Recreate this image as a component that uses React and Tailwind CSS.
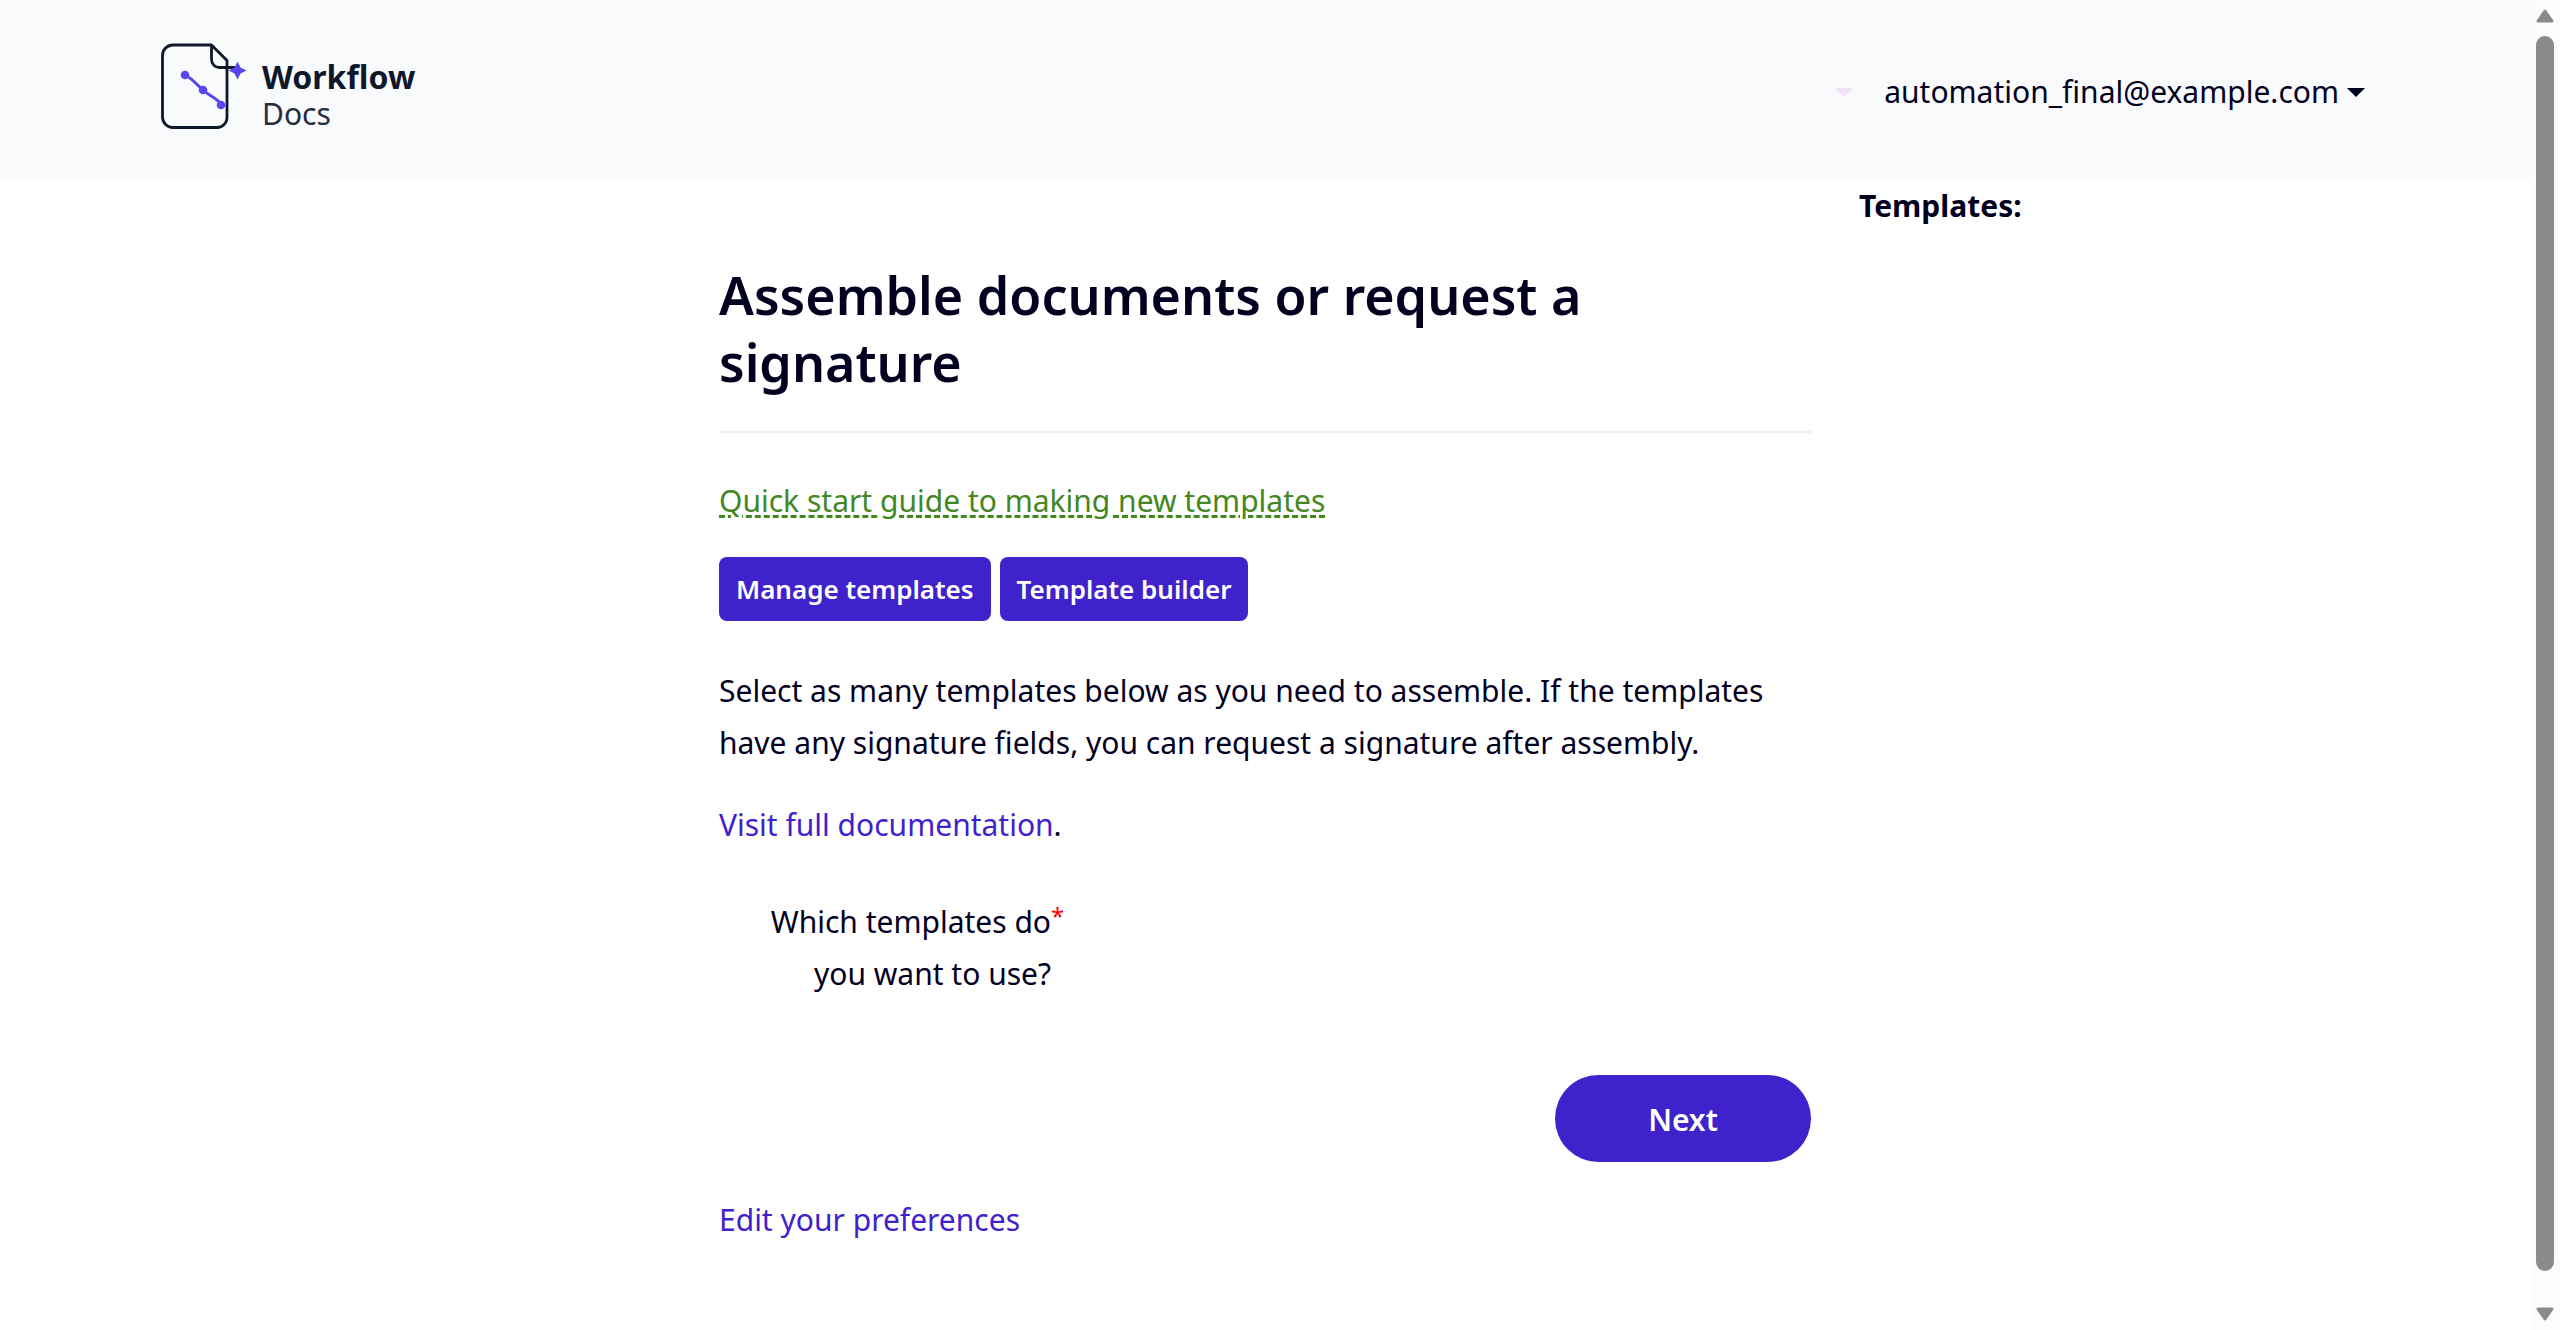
import React from "react";

function Logo() {
  return (
    <svg width="86" height="88" viewBox="0 0 86 88" fill="none" aria-hidden="true">
      <path
        d="M50 2H12A10.500 10.500 0 0 0 1.500 12.500V74A10.500 10.500 0 0 0 12 84.500H56A10 10 0 0 0 66 74.500V17.500L50.500 2V16.500A8 8 0 0 0 58.500 24.500H73"
        stroke="#0f172a"
        strokeWidth="2.800"
        strokeLinejoin="round"
        strokeLinecap="round"
      />
      <path
        d="M24 32C32 36 37 43 42 47C47 52 56 55 60 61"
        stroke="#5b45f0"
        strokeWidth="3"
        strokeLinecap="round"
      />
      <circle cx="24" cy="32" r="4.300" fill="#5b45f0" />
      <circle cx="42" cy="47" r="4.300" fill="#5b45f0" />
      <circle cx="60" cy="62" r="4.300" fill="#5b45f0" />
      <path d="M76.500 18.500L79.500 24.500L85.500 27.500L79.500 30.500L76.500 36.500L73.500 30.500L67.500 27.500L73.500 24.500Z" fill="#5b45f0" />
    </svg>
  );
}

function Caret({ className }) {
  return (
    <svg width="18" height="9" viewBox="0 0 18 9" className={className} aria-hidden="true">
      <path d="M0 0H18L9 9Z" fill="currentColor" />
    </svg>
  );
}

function ScrollArrow({ className }) {
  return (
    <svg width="18" height="14" viewBox="0 0 18 14" className={className} aria-hidden="true">
      <path d="M9 2L16 12H2Z" fill="#8b8b8b" stroke="#8b8b8b" strokeWidth="3" strokeLinejoin="round" />
    </svg>
  );
}

function Header() {
  return (
    <header className="bg-[#f8fafc]">
      <div className="mx-auto flex max-w-[2280px] items-start justify-between pt-[43px] pr-10 pb-12 pl-9">
        <a href="#home" className="flex items-start gap-[15px]">
          <Logo />
          <span className="flex flex-col pt-[15px] text-[#0f172a]">
            <span className="text-[32px] leading-[37px] font-bold">Workflow</span>
            <span className="text-[30px] leading-[37px] text-[#272c40]">Docs</span>
          </span>
        </a>
        <nav className="flex items-center gap-[31px] pt-[23px]">
          <button type="button" aria-label="Menu" className="text-[#ede3f5]">
            <Caret />
          </button>
          <button type="button" className="flex items-center gap-2 leading-[52px]">
            automation_final@example.com
            <Caret />
          </button>
        </nav>
      </div>
    </header>
  );
}

function ActionLink({ href, children }) {
  return (
    <a
      href={href}
      className="rounded-lg bg-[#3f22cb] px-[17px] py-3 text-[26px] leading-10 font-semibold text-white"
    >
      {children}
    </a>
  );
}

export default function App() {
  return (
    <div className="flex min-h-screen bg-white font-['Noto_Sans',sans-serif] text-[30px] leading-[52px] text-[#02001f]">
      <div className="min-w-0 flex-1">
        <Header />
        <div className="mx-auto flex max-w-[2280px]">
          <main className="ml-[25%] w-1/2 px-6 pt-[81px]">
            <h1 className="border-b-2 border-[#ececec] pb-9 text-[52px] leading-[67px] font-semibold">
              Assemble documents or request a signature
            </h1>
            <p className="mt-[42px]">
              <a
                href="#guide"
                className="text-[#438722] underline decoration-dashed decoration-[3px] underline-offset-[3px]"
              >
                Quick start guide to making new templates
              </a>
            </p>
            <div className="mt-[30px] flex gap-[9px]">
              <ActionLink href="#manage">Manage templates</ActionLink>
              <ActionLink href="#builder">Template builder</ActionLink>
            </div>
            <p className="mt-11">
              Select as many templates below as you need to assemble. If the templates have any
              signature fields, you can request a signature after assembly.
            </p>
            <p className="mt-[30px]">
              <a href="#docs" className="text-[#3f22cb]">
                Visit full documentation
              </a>
              .
            </p>
            <form onSubmit={(e) => e.preventDefault()}>
              <div role="group" aria-labelledby="templates-question" className="mt-[45px]">
                <p id="templates-question" className="relative ml-10 w-[292px] text-right">
                  Which templates do you want to use?
                  <span className="absolute top-1 left-full text-2xl text-[#ff0000]">*</span>
                </p>
              </div>
              <div className="mt-[75px] flex justify-end">
                <button
                  type="submit"
                  className="w-64 rounded-full bg-[#3f22cb] pt-[19px] pb-4 font-semibold text-white"
                >
                  Next
                </button>
              </div>
            </form>
            <p className="mt-8">
              <a href="#preferences" className="text-[#3f22cb]">
                Edit your preferences
              </a>
            </p>
          </main>
          <aside className="w-1/4 px-6">
            <h2 className="font-bold">Templates:</h2>
          </aside>
        </div>
      </div>
      <div
        className="sticky top-0 flex h-screen w-[30px] flex-col items-center bg-[#fcfcfc] py-[9px]"
        aria-hidden="true"
      >
        <ScrollArrow />
        <div className="mt-[13px] mb-9 w-[18px] flex-1 rounded-full bg-[#8b8b8b]" />
        <ScrollArrow className="rotate-180" />
      </div>
    </div>
  );
}
